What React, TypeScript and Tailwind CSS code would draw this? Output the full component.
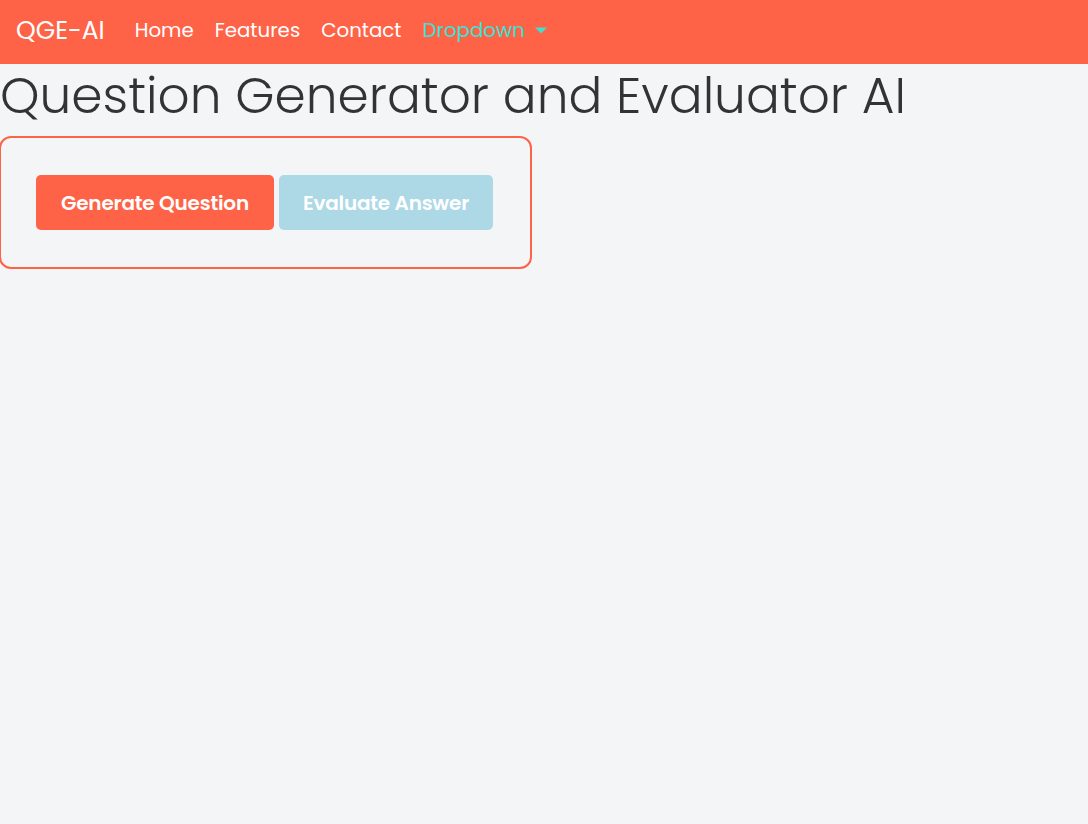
import React from "react";

const navLinks = ["Home", "Features", "Contact"];

const App = (): JSX.Element => {
  return (
    <div className="min-h-screen bg-[#f4f5f7] font-['Poppins','Noto_Sans',sans-serif] text-[#333]">
      <nav className="flex h-16 items-center bg-[#ff6347] px-4 pb-[3px]">
        <span className="mr-[30px] text-[25px] text-white">QGE-AI</span>
        <ul className="flex items-center gap-[21px] text-[19.8px]">
          {navLinks.map((link) => (
            <li key={link} className="text-white">
              {link}
            </li>
          ))}
          <li className="flex items-center gap-[10px] text-[#40e0d0]">
            Dropdown
            <svg width="12" height="7" viewBox="0 0 12 7">
              <path d="M0 0.5h12L6 6.5z" fill="#40e0d0" />
            </svg>
          </li>
        </ul>
      </nav>

      <h1 className="mb-2 text-[50.2px] leading-[64px] font-light">
        Question Generator and Evaluator AI
      </h1>

      <div className="-ml-px flex w-[533px] gap-[5px] rounded-xl border-2 border-[#ff6347] px-[35px] py-[37px]">
        <button className="h-[55px] w-[238px] rounded-[5px] bg-[#ff6347] text-[20px] font-semibold tracking-[-0.2px] text-white">
          Generate Question
        </button>
        <button className="h-[55px] w-[214px] rounded-[5px] bg-[#add8e6] text-[20px] font-semibold tracking-[-0.2px] text-white">
          Evaluate Answer
        </button>
      </div>
    </div>
  );
};

export default App;
